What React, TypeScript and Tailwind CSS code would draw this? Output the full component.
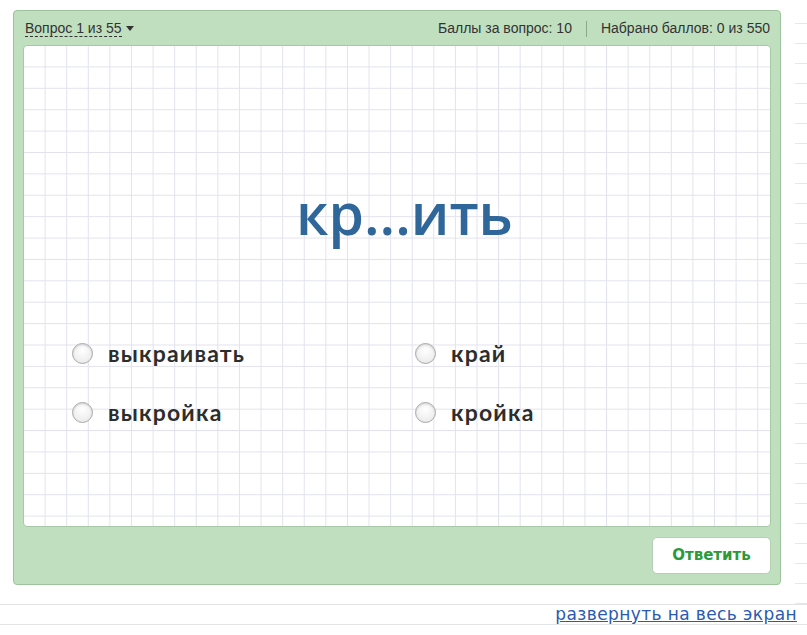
import React, { useState } from 'react';

const options = ['выкраивать', 'край', 'выкройка', 'кройка'];

function Radio({ label, checked, onPick }: { label: string; checked: boolean; onPick: () => void }) {
    return (
        <label className="flex items-center gap-[15px] cursor-pointer h-[30px]" onClick={onPick}>
            <span className="w-[21px] h-[21px] rounded-full border border-[#a8a8a8] bg-[radial-gradient(circle_at_50%_35%,#ffffff,#e6e6e6)] shadow-[inset_0_1px_2px_rgba(0,0,0,0.15)] flex items-center justify-center">
                {checked && <span className="w-[9px] h-[9px] rounded-full bg-[#555]" />}
            </span>
            <span className="font-['Comic_Sans_MS','Lato','Noto_Sans',sans-serif] font-bold text-[23px] text-[#2d2d2d] leading-none tracking-[1.2px]">
                {label}
            </span>
        </label>
    );
}

export default function App() {
    const [selected, setSelected] = useState('');

    return (
        <div className="w-[807px] h-[635px] bg-white flex flex-col overflow-hidden font-['Liberation_Sans',Arial,sans-serif]">
            <div className="flex h-[604px]">
                <div className="w-[13px]" />
                {/* main quiz panel */}
                <div className="mt-[10px] w-[768px] h-[575px] bg-[#c0dfbf] border border-[#9ec39c] rounded-[4px] flex flex-col px-[9px]">
                    <div className="h-[34px] flex items-center justify-between text-[14px] text-[#333] pt-[1px]">
                        <div className="flex items-center gap-[4px] pl-[2px]">
                            <span className="border-b border-dashed border-[#333] leading-[16px]">Вопрос 1 из 55</span>
                            <span className="w-0 h-0 border-l-[4px] border-r-[4px] border-t-[5px] border-l-transparent border-r-transparent border-t-[#333] mb-[1px]" />
                        </div>
                        <div className="flex items-center pr-[1px]">
                            <span>Баллы за вопрос: 10</span>
                            <span className="mx-[14px] w-px h-[16px] bg-[#8aa989]" />
                            <span>Набрано баллов: 0 из 550</span>
                        </div>
                    </div>
                    <div className="h-[482px] bg-white border border-[#a7c7a6] rounded-[4px] bg-[linear-gradient(to_left,#e2e2ee_1px,transparent_1px),linear-gradient(to_top,#e2e2ee_1px,transparent_1px)] bg-[size:21.6px_21.4px] bg-[position:0_0] flex flex-col">
                        <div className="h-[292px] flex items-center justify-center pt-[42px] pl-[15px]">
                            <span className="font-['Open_Sans','Noto_Sans',sans-serif] font-semibold text-[57px] text-[#30679a] leading-none">кр...ить</span>
                        </div>
                        <div className="grid grid-cols-[343px_1fr] gap-y-[29px] pl-[48px]">
                            {options.map((o) => (
                                <Radio key={o} label={o} checked={selected === o} onPick={() => setSelected(o)} />
                            ))}
                        </div>
                    </div>
                    <div className="flex-1 flex items-center justify-end">
                        <button className="w-[119px] h-[37px] bg-white rounded-[5px] border border-[#b4cfb3] text-[#2b9a3b] font-bold text-[15px] font-['DejaVu_Sans',Verdana,sans-serif]">
                            Ответить
                        </button>
                    </div>
                </div>
                <div className="w-[13px]" />
                <div className="flex-1 mt-[4px] bg-[repeating-linear-gradient(to_bottom,transparent_0,transparent_19px,#e6e6ee_19px,#e6e6ee_20px)] ml-[1px]" />
            </div>
            <div className="border-t border-[#e3e3ea] h-[20px] flex justify-end pr-[10px]">
                <a href="#" className="text-[17px] leading-[19px] text-[#2a5bb0] underline tracking-[0.4px] font-['DejaVu_Sans',Verdana,sans-serif]">
                    развернуть на весь экран
                </a>
            </div>
            <div className="border-t border-[#e3e3ea] flex-1" />
        </div>
    );
}
